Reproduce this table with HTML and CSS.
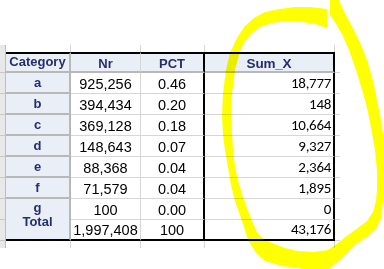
FILE: index.html
```html
<!DOCTYPE html>
<html lang="en">
  <head>
    <meta charset="utf-8" />
    <title>Category totals</title>
    <link rel="stylesheet" href="styles.css">
  </head>
  <body>
    <table class="sheet">
      <tr class="stub">
        <td class="rh"></td><td class="cat"></td><td class="nr"></td><td class="pct"></td><td class="sum"></td><td class="pad"></td>
      </tr>
      <tr class="head">
        <td class="rh"></td>
        <th class="cat">Category</th>
        <th class="nr">Nr</th>
        <th class="pct">PCT</th>
        <th class="sum">Sum_X</th>
        <td class="pad"></td>
      </tr>
      <tr>
        <td class="rh"></td><td class="cat">a</td><td class="nr">925,256</td><td class="pct">0.46</td><td class="sum">18,777</td><td class="pad"></td>
      </tr>
      <tr>
        <td class="rh"></td><td class="cat">b</td><td class="nr">394,434</td><td class="pct">0.20</td><td class="sum">148</td><td class="pad"></td>
      </tr>
      <tr>
        <td class="rh"></td><td class="cat">c</td><td class="nr">369,128</td><td class="pct">0.18</td><td class="sum">10,664</td><td class="pad"></td>
      </tr>
      <tr>
        <td class="rh"></td><td class="cat">d</td><td class="nr">148,643</td><td class="pct">0.07</td><td class="sum">9,327</td><td class="pad"></td>
      </tr>
      <tr>
        <td class="rh"></td><td class="cat">e</td><td class="nr">88,368</td><td class="pct">0.04</td><td class="sum">2,364</td><td class="pad"></td>
      </tr>
      <tr>
        <td class="rh"></td><td class="cat">f</td><td class="nr">71,579</td><td class="pct">0.04</td><td class="sum">1,895</td><td class="pad"></td>
      </tr>
      <tr class="row-g">
        <td class="rh"></td><td class="cat last" rowspan="2">g<br>Total</td><td class="nr">100</td><td class="pct">0.00</td><td class="sum">0</td><td class="pad"></td>
      </tr>
      <tr class="total">
        <td class="rh"></td><td class="nr">1,997,408</td><td class="pct">100</td><td class="sum">43,176</td><td class="pad"></td>
      </tr>
      <tr class="stub">
        <td class="rh"></td><td class="cat"></td><td class="nr"></td><td class="pct"></td><td class="sum"></td><td class="pad"></td>
      </tr>
    </table>

    <!-- highlighter scribble over the Sum_X column -->
    <svg class="marker" width="384" height="269" viewBox="0 0 384 269">
      <path d="M327,9 L310,7 L295,7 L280,9 L265,12 L254,18 L245,26 L237,38 L230,53 L226,70 L223,93 L222,115 L223,135 L225,150 L228,167 L231,185 L235,201 L242,221 L248,240 L256,253 L265,261 L282,266 L298,268 L315,272 L328,270 L342,258 L355,245 L368,236 L376,229 L381,218 L383,201 L384,170 L383,134 L380,115 L376,95 L372,77 L367,60 L362,47 L355,32 L348,19 L342,7 L338,-2 L330,-2 L330,15 L336,24 L342,34 L349,50 L355,67 L360,83 L365,100 L369,117 L372,133 L375,150 L377,170 L377,190 L376,201 L373,212 L367,221 L358,228 L348,235 L338,243 L328,250 L313,252 L298,251 L285,248 L275,244 L265,240 L258,234 L252,221 L247,208 L242,194 L238,180 L235,167 L233,150 L232,134 L231,115 L232,93 L235,70 L240,51 L245,41 L252,33 L260,27 L272,23 L287,21 L302,22 L315,24 L327,28 Z" />
    </svg>
  </body>
</html>
```

FILE: styles.css
```css
html, body {
  margin: 0;
  padding: 0;
  background-color: #FFF;
}
body {
  width: 384px;
  height: 269px;
  overflow: hidden;
  position: relative;
}

.sheet {
  margin-top: 45px;
  table-layout: fixed;
  width: 340px;
  border-collapse: separate;
  border-spacing: 0;
  font-family: "Liberation Sans", Arial, sans-serif;
  font-size: 14.5px;
  line-height: 1;
  color: #000;
}
.sheet td, .sheet th {
  box-sizing: border-box;
  height: 21px;
  padding: 0 0 2px;
  vertical-align: bottom;
  text-align: center;
  font-weight: normal;
  white-space: nowrap;
}

/* columns */
.rh  { width: 6px; background-color: #E8E8E8; border-right: 1px solid #BDBDBD; border-bottom: 1px solid #C8C8C8; }
.cat { width: 65px; }
.nr  { width: 70px; }
.pct { width: 64px; }
.sum { width: 130px; }
.pad { width: 5px; border-bottom: 1px solid #D6D6D6; }

/* data cells */
.sheet .cat {
  background-color: #E9EEF7;
  border-right: 2px solid #B8B8B8;
  border-bottom: 2px solid #B8B8B8;
  color: #262F6E;
  font-weight: bold;
  font-size: 13px;
  padding-bottom: 3px;
}
.nr  { border-right: 1px solid #D6D6D6; border-bottom: 1px solid #D6D6D6; }
.pct { border-right: 2px solid #000; border-bottom: 1px solid #D6D6D6; }
.sheet .sum {
  border-right: 2px solid #000;
  border-bottom: 1px solid #D6D6D6;
  text-align: right;
  padding-right: 2px;
  font-family: Carlito, Lato, sans-serif;
  font-size: 15px;
  letter-spacing: -0.3px;
}

/* header row */
.head > * { height: 22px; }
.head th {
  border-top: 2px solid #000;
  border-bottom: 2px solid #B8B8B8;
  background-color: #E9EEF7;
  color: #262F6E;
  padding-bottom: 1px;
}
.sheet .head th { font-weight: bold; font-size: 13px; }
.sheet .head .sum {
  text-align: center;
  padding-right: 0;
  font-family: "Liberation Sans", Arial, sans-serif;
  font-size: 13.5px;
  letter-spacing: -0.2px;
  border-bottom: 2px solid #B8B8B8;
}

/* g and Total share one label cell */
.row-g > * { height: 20px; }
.sheet .last {
  height: auto;
  vertical-align: top;
  padding: 2px 0 0;
  line-height: 14px;
  border-bottom: 2px solid #000;
}
.total .nr, .total .pct, .sheet .total .sum { border-bottom: 2px solid #000; }

/* grid stubs above and below the table */
.sheet .stub td {
  height: 7px;
  padding: 0;
  background-color: transparent;
  border-top: 0;
  border-bottom: 0;
  border-right: 1px solid #D6D6D6;
}
.sheet .stub .rh { background-color: #E8E8E8; border-right-color: #BDBDBD; }
.sheet .stub .pad { border-right: 0; }

.marker {
  position: absolute;
  left: 0;
  top: 0;
  mix-blend-mode: multiply;
  pointer-events: none;
}
.marker path { fill: #FFFF00; }
```
